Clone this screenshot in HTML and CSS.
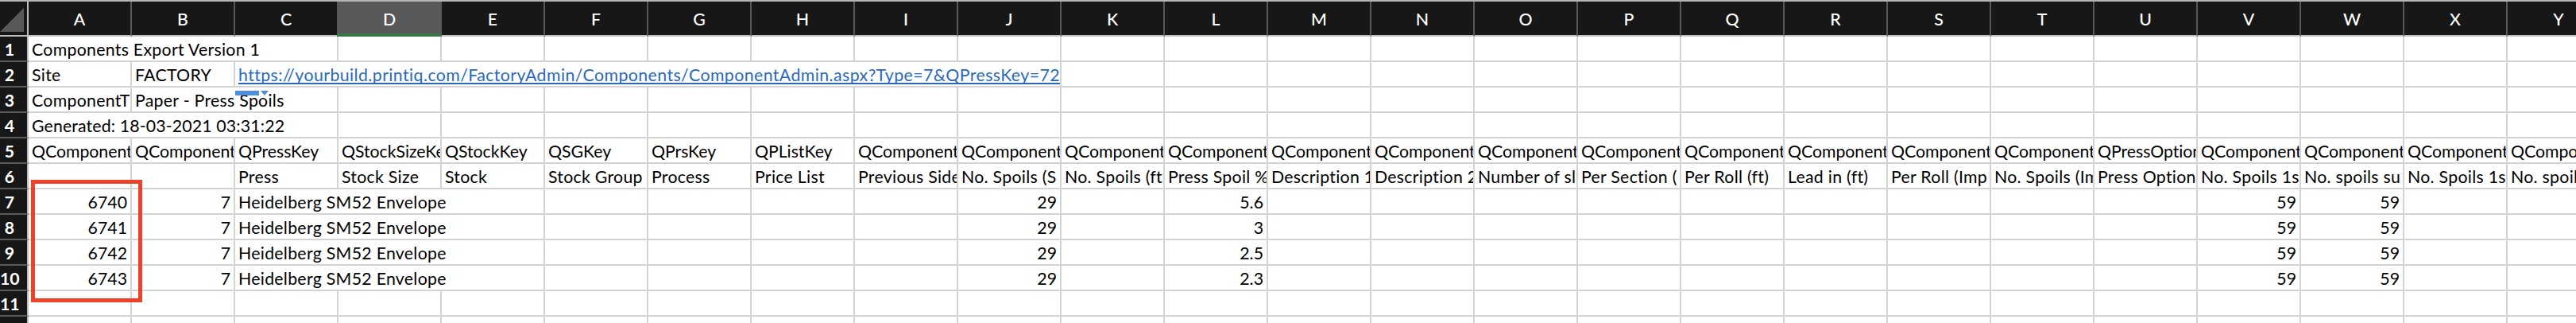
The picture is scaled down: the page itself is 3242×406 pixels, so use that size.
FILE: index.html
```html
<!DOCTYPE html>
<html lang="en">
<head>
  <meta charset="UTF-8" />
  <meta name="viewport" content="width=device-width, initial-scale=1.0"/>
  <title>Components Export</title>
  <link rel="stylesheet" href="styles.css">
</head>
<body>
  <div class="workbook">
    <table class="sheet">
      <colgroup>
        <col class="col-rows">
        <col span="25" class="col-data">
      </colgroup>
      <thead>
        <tr>
          <th class="corner"><svg width="30" height="30" viewBox="0 0 30 30"><path d="M30 0V30H0Z" fill="#595959"/></svg></th>
          <th>A</th><th>B</th><th>C</th><th class="selected">D</th><th>E</th>
          <th>F</th><th>G</th><th>H</th><th>I</th><th>J</th>
          <th>K</th><th>L</th><th>M</th><th>N</th><th>O</th>
          <th>P</th><th>Q</th><th>R</th><th>S</th><th>T</th>
          <th>U</th><th>V</th><th>W</th><th>X</th><th>Y</th>
        </tr>
      </thead>
      <tbody>
        <tr>
          <th>1</th>
          <td colspan="3">Components Export Version 1</td>
          <td></td><td></td><td></td><td></td><td></td><td></td><td></td><td></td><td></td><td></td><td></td>
          <td></td><td></td><td></td><td></td><td></td><td></td><td></td><td></td><td></td><td></td><td></td>
        </tr>
        <tr>
          <th>2</th>
          <td>Site</td>
          <td>FACTORY</td>
          <td colspan="8" class="link"><a>https://yourbuild.printiq.com/FactoryAdmin/Components/ComponentAdmin.aspx?Type=7&amp;QPressKey=72</a></td>
          <td></td><td></td><td></td><td></td><td></td><td></td><td></td><td></td>
          <td></td><td></td><td></td><td></td><td></td><td></td><td></td>
        </tr>
        <tr>
          <th>3</th>
          <td>ComponentT</td>
          <td colspan="2">Paper - Press Spoils</td>
          <td></td><td></td><td></td><td></td><td></td><td></td><td></td><td></td><td></td><td></td><td></td>
          <td></td><td></td><td></td><td></td><td></td><td></td><td></td><td></td><td></td><td></td><td></td>
        </tr>
        <tr>
          <th>4</th>
          <td colspan="3" class="stamp">Generated: 18-03-2021 03:31:22</td>
          <td></td><td></td><td></td><td></td><td></td><td></td><td></td><td></td><td></td><td></td><td></td>
          <td></td><td></td><td></td><td></td><td></td><td></td><td></td><td></td><td></td><td></td><td></td>
        </tr>
        <tr class="keys">
          <th>5</th>
          <td>QComponent</td>
          <td>QComponent</td>
          <td>QPressKey</td>
          <td>QStockSizeKe</td>
          <td>QStockKey</td>
          <td>QSGKey</td>
          <td>QPrsKey</td>
          <td>QPListKey</td>
          <td>QComponent</td>
          <td>QComponent</td>
          <td>QComponent</td>
          <td>QComponent</td>
          <td>QComponent</td>
          <td>QComponent</td>
          <td>QComponent</td>
          <td>QComponent</td>
          <td>QComponent</td>
          <td>QComponent</td>
          <td>QComponent</td>
          <td>QComponent</td>
          <td>QPressOption</td>
          <td>QComponent</td>
          <td>QComponent</td>
          <td>QComponent</td>
          <td>QComponent</td>
        </tr>
        <tr>
          <th>6</th>
          <td></td>
          <td></td>
          <td>Press</td>
          <td>Stock Size</td>
          <td>Stock</td>
          <td>Stock Group</td>
          <td>Process</td>
          <td>Price List</td>
          <td>Previous Side</td>
          <td>No. Spoils (S</td>
          <td>No. Spoils (ft</td>
          <td>Press Spoil %</td>
          <td>Description 1</td>
          <td>Description 2</td>
          <td>Number of sl</td>
          <td>Per Section (</td>
          <td>Per Roll (ft)</td>
          <td>Lead in (ft)</td>
          <td>Per Roll (Imp</td>
          <td>No. Spoils (Im</td>
          <td>Press Option</td>
          <td>No. Spoils 1s</td>
          <td>No. spoils su</td>
          <td>No. Spoils 1s</td>
          <td>No. spoils</td>
        </tr>
        <tr>
          <th>7</th>
          <td class="num">6740</td>
          <td class="num">7</td>
          <td colspan="3">Heidelberg SM52 Envelope</td>
          <td></td><td></td><td></td><td></td>
          <td class="num">29</td>
          <td></td>
          <td class="num">5.6</td>
          <td></td><td></td><td></td><td></td><td></td><td></td><td></td><td></td><td></td>
          <td class="num">59</td>
          <td class="num">59</td>
          <td></td><td></td>
        </tr>
        <tr>
          <th>8</th>
          <td class="num">6741</td>
          <td class="num">7</td>
          <td colspan="3">Heidelberg SM52 Envelope</td>
          <td></td><td></td><td></td><td></td>
          <td class="num">29</td>
          <td></td>
          <td class="num">3</td>
          <td></td><td></td><td></td><td></td><td></td><td></td><td></td><td></td><td></td>
          <td class="num">59</td>
          <td class="num">59</td>
          <td></td><td></td>
        </tr>
        <tr>
          <th>9</th>
          <td class="num">6742</td>
          <td class="num">7</td>
          <td colspan="3">Heidelberg SM52 Envelope</td>
          <td></td><td></td><td></td><td></td>
          <td class="num">29</td>
          <td></td>
          <td class="num">2.5</td>
          <td></td><td></td><td></td><td></td><td></td><td></td><td></td><td></td><td></td>
          <td class="num">59</td>
          <td class="num">59</td>
          <td></td><td></td>
        </tr>
        <tr>
          <th>10</th>
          <td class="num">6743</td>
          <td class="num">7</td>
          <td colspan="3">Heidelberg SM52 Envelope</td>
          <td></td><td></td><td></td><td></td>
          <td class="num">29</td>
          <td></td>
          <td class="num">2.3</td>
          <td></td><td></td><td></td><td></td><td></td><td></td><td></td><td></td><td></td>
          <td class="num">59</td>
          <td class="num">59</td>
          <td></td><td></td>
        </tr>
        <tr>
          <th>11</th>
          <td></td><td></td><td></td><td></td><td></td><td></td><td></td><td></td><td></td><td></td><td></td><td></td><td></td>
          <td></td><td></td><td></td><td></td><td></td><td></td><td></td><td></td><td></td><td></td><td></td><td></td>
        </tr>
        <tr>
          <th></th>
          <td></td><td></td><td></td><td></td><td></td><td></td><td></td><td></td><td></td><td></td><td></td><td></td><td></td>
          <td></td><td></td><td></td><td></td><td></td><td></td><td></td><td></td><td></td><td></td><td></td><td></td>
        </tr>
      </tbody>
    </table>

    <div class="highlight"></div>
    <svg class="paste-tag" width="42" height="6" viewBox="0 0 42 6">
      <path d="M0 0H30V6H0ZM32 0H42L37 6Z" fill="#4f8ddb"/>
    </svg>
  </div>
</body>
</html>
```

FILE: styles.css
```css
* {
  box-sizing: border-box;
  margin: 0;
  padding: 0;
}

body {
  background: #fff;
  font-family: Lato, sans-serif;
  font-size: 21.3px;
  color: #000;
  overflow: hidden;
}

.workbook {
  position: relative;
  height: 406px;
  border-top: 2px solid #b4b5b6;
  overflow: hidden;
}

.sheet {
  width: 3286px;
  table-layout: fixed;
  border-collapse: separate;
  border-spacing: 0;
}

.col-rows {
  width: 36px;
}

.col-data {
  width: 130px;
}

th,
td {
  height: 32px;
  line-height: 28px;
  padding-top: 2px;
  white-space: nowrap;
  overflow: hidden;
  vertical-align: top;
}

td {
  padding-left: 4px;
  text-align: left;
  letter-spacing: 0.28px;
  border-right: 2px solid #d4d4d4;
  border-bottom: 2px solid #d4d4d4;
}

.num {
  padding-right: 4px;
  text-align: right;
  letter-spacing: 0;
}

.stamp {
  letter-spacing: 0.13px;
}

.keys td {
  letter-spacing: -0.05px;
}

/* column letters */
thead th {
  height: 44px;
  line-height: 40px;
  background: #171717;
  color: #fff;
  font-weight: 500;
  border-right: 2px solid #595959;
  border-bottom: 2px solid #bfbfbf;
}

thead .selected {
  position: relative;
  overflow: visible;
  background: #595959;
}

thead .selected::after {
  content: '';
  position: absolute;
  left: -2px;
  right: -2px;
  bottom: -2px;
  height: 4px;
  background: #3a7548;
}

thead .corner {
  border-right-color: #bfbfbf;
  line-height: 0;
  text-align: left;
  padding-top: 8px;
}

/* row numbers */
tbody th {
  background: #171717;
  color: #fff;
  font-weight: 700;
  padding-right: 10px;
  border-right: 2px solid #bfbfbf;
  border-bottom: 2px solid #595959;
}

.link {
  letter-spacing: 0.42px;
}

.link a {
  color: #2968c0;
  text-decoration: underline;
  text-decoration-thickness: 2px;
  text-decoration-skip-ink: none;
  text-underline-offset: 2px;
}

.highlight {
  position: absolute;
  left: 39px;
  top: 224px;
  width: 140px;
  height: 154px;
  border: 5px solid #ee4128;
}

.paste-tag {
  position: absolute;
  left: 296px;
  top: 112px;
}
```
